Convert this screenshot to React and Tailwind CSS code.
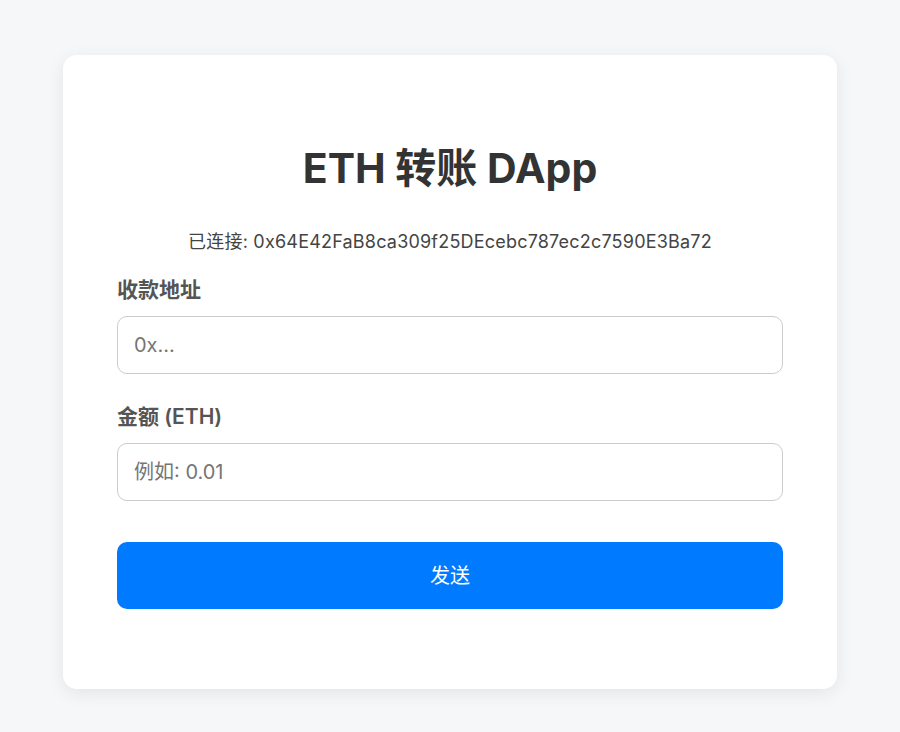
const font = { fontFamily: 'Inter, "Noto Sans CJK SC", sans-serif' }

function Field({ label, placeholder }) {
  return (
    <div className="flex flex-col">
      <label className="text-[21px] leading-[24px] font-semibold text-[#555]">{label}</label>
      <input
        type="text"
        placeholder={placeholder}
        className="mt-[14px] h-[58px] w-full rounded-[10px] border border-[#cccccc] bg-white px-[16px] text-[20px] text-[#333] outline-none placeholder:text-[#757575]"
      />
    </div>
  )
}

export default function App() {
  return (
    <div className="min-h-[732px] w-full bg-[#f6f7f9] pt-[55px]" style={font}>
      <div className="mx-auto w-[774px] rounded-[14px] bg-white px-[54px] pt-[89px] pb-[80px] shadow-[0_4px_18px_rgba(0,0,0,0.08)]">
        <h1 className="text-center text-[41px] leading-[48px] font-bold text-[#333]">ETH 转账 DApp</h1>
        <p className="mt-[38px] text-center text-[18px] leading-[24px] tracking-[0.2px] text-[#444]">
          已连接: 0x64E42FaB8ca309f25DEcebc787ec2c7590E3Ba72
        </p>
        <div className="mt-[24px] flex flex-col gap-[31px]">
          <Field label="收款地址" placeholder="0x..." />
          <Field label="金额 (ETH)" placeholder="例如: 0.01" />
        </div>
        <button className="mt-[41px] h-[67px] w-full rounded-[10px] bg-[#007bff] text-[20px] text-white">
          发送
        </button>
      </div>
    </div>
  )
}
